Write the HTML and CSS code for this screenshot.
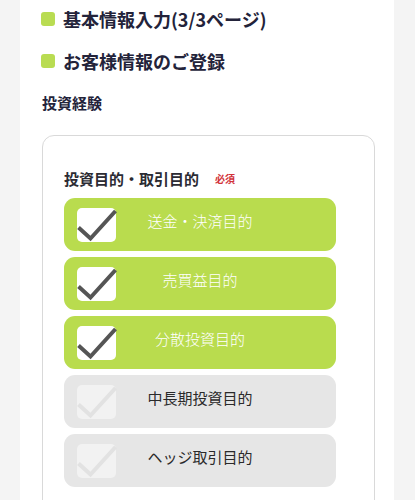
FILE: index.html
```html
<!DOCTYPE html>
<html lang="ja">

<head>
    <meta charset="UTF-8">
    <meta name="viewport" content="width=device-width, initial-scale=1.0">
    <title>お客様情報のご登録</title>
    <link rel="stylesheet" href="styles.css">
</head>

<body>
    <div class="panel">
        <h2 class="step">基本情報入力(3/3ページ)</h2>
        <h2 class="step second">お客様情報のご登録</h2>
        <h3 class="section-title">投資経験</h3>

        <div class="card">
            <div class="field-label">
                投資目的・取引目的
                <span class="required">必須</span>
            </div>

            <div class="options">
                <label class="option checked">
                    <span class="box">
                        <svg width="39" height="34" viewBox="0 0 39 34"><path d="M1.5 19.5 L13.5 30.5 L38.5 3"/></svg>
                    </span>
                    <span class="option-text">送金・決済目的</span>
                </label>
                <label class="option checked">
                    <span class="box">
                        <svg width="39" height="34" viewBox="0 0 39 34"><path d="M1.5 19.5 L13.5 30.5 L38.5 3"/></svg>
                    </span>
                    <span class="option-text">売買益目的</span>
                </label>
                <label class="option checked">
                    <span class="box">
                        <svg width="39" height="34" viewBox="0 0 39 34"><path d="M1.5 19.5 L13.5 30.5 L38.5 3"/></svg>
                    </span>
                    <span class="option-text">分散投資目的</span>
                </label>
                <label class="option">
                    <span class="box">
                        <svg width="39" height="34" viewBox="0 0 39 34"><path d="M1.5 19.5 L13.5 30.5 L38.5 3"/></svg>
                    </span>
                    <span class="option-text">中長期投資目的</span>
                </label>
                <label class="option">
                    <span class="box">
                        <svg width="39" height="34" viewBox="0 0 39 34"><path d="M1.5 19.5 L13.5 30.5 L38.5 3"/></svg>
                    </span>
                    <span class="option-text">ヘッジ取引目的</span>
                </label>
            </div>
        </div>
    </div>
</body>

</html>
```

FILE: styles.css
```css
body {
    margin: 0;
    padding: 0;
    background-color: #f4f4f4;
    font-family: "Noto Sans CJK JP", "Noto Sans", sans-serif;
    color: #23233a;
}

.panel {
    background-color: #ffffff;
    margin: 0 21px 0 20px;
    padding: 6px 0 40px 21px;
    min-height: 500px;
    box-sizing: border-box;
}

.step {
    display: flex;
    align-items: center;
    gap: 8px;
    margin: 0;
    font-size: 18px;
    font-weight: bold;
    line-height: 26px;
}

.step::before {
    content: "";
    width: 14px;
    height: 14px;
    border-radius: 3px;
    background-color: #b9dc52;
}

.step.second {
    margin-top: 16px;
}

.section-title {
    margin: 19px 0 0 1px;
    font-size: 15px;
    font-weight: bold;
    line-height: 20px;
}

.card {
    margin: 22px 19px 0 1px;
    border: 1px solid #d9d9d9;
    border-radius: 12px;
    padding: 33px 38px 30px 21px;
}

.field-label {
    display: flex;
    align-items: center;
    font-size: 15px;
    font-weight: bold;
    line-height: 20px;
    color: #2b2b33;
}

.required {
    margin-left: 16px;
    font-size: 10px;
    color: #d2333a;
}

.options {
    display: flex;
    flex-direction: column;
    gap: 6px;
    margin-top: 9px;
}

.option {
    display: grid;
    grid-template-columns: 39px 1fr 39px;
    align-items: center;
    height: 53px;
    padding: 0 13px;
    border-radius: 11px;
    background-color: #e6e6e6;
    color: #2a2a2a;
}

.option.checked {
    background-color: #b9dc4e;
    color: #ffffff;
}

.box {
    display: block;
    width: 39px;
    height: 34px;
    border-radius: 5px;
    background-color: #f2f2f2;
}

.option.checked .box {
    background-color: #ffffff;
}

.box svg {
    display: block;
    overflow: visible;
}

.box path {
    fill: none;
    stroke: #e2e2e2;
    stroke-width: 4;
}

.option.checked .box path {
    stroke: #555555;
}

.option-text {
    text-align: center;
    font-size: 15px;
    line-height: 20px;
    padding-bottom: 8px;
}

.option.checked .option-text {
    font-weight: 300;
}
```
